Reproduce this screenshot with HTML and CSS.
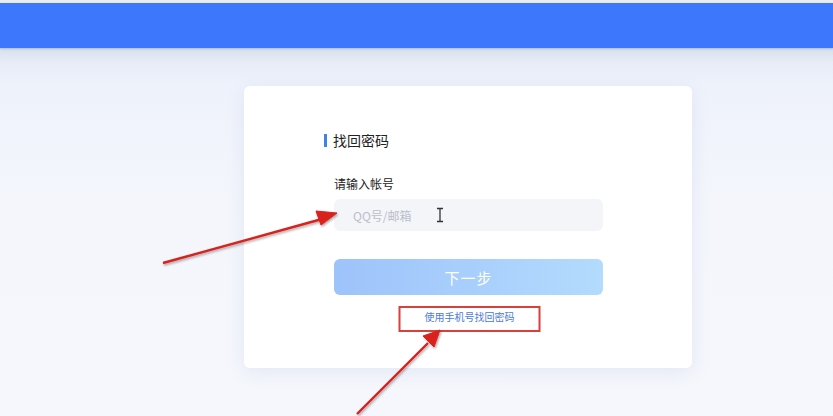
FILE: index.html
```html
<!DOCTYPE html>
<html lang="zh">
<head>
<meta charset="utf-8">
<link rel="stylesheet" href="styles.css">
</head>
<body>
<div class="topline"></div>
<header class="header"></header>
<main class="main">
  <section class="card">
    <div class="title"><span class="bar"></span><span>找回密码</span></div>
    <div class="label">请输入帐号</div>
    <div class="input">
      <span class="ph">QQ号/邮箱</span>
      <svg class="ibeam" width="8" height="16" viewBox="0 0 8 16"><path d="M1 1.5h6M1 14.5h6M4 1.5v13" stroke="#333" stroke-width="1.3" fill="none"/></svg>
    </div>
    <button class="btn">下一步</button>
    <div class="linkrow"><a class="link">使用手机号找回密码</a></div>
  </section>
</main>
<svg class="annot" width="833" height="416" viewBox="0 0 833 416">
  <defs>
    <filter id="sh" x="-20%" y="-20%" width="140%" height="140%">
      <feDropShadow dx="1" dy="1.5" stdDeviation="1" flood-color="#000" flood-opacity="0.35"/>
    </filter>
  </defs>
  <rect x="399.5" y="307" width="140" height="24" fill="none" stroke="#d8403c" stroke-width="2"/>
  <g filter="url(#sh)" fill="#d9211c" stroke="#d9211c">
    <line x1="163" y1="263" x2="322" y2="219" stroke-width="2.4"/>
    <polygon points="337,213 316,211 321,225" stroke-width="1"/>
    <line x1="357" y1="414" x2="428" y2="343" stroke-width="2.4"/>
    <polygon points="440,330 423,336 434,347" stroke-width="1"/>
  </g>
</svg>
</body>
</html>
```
FILE: styles.css
```css
html, body {
  margin: 0;
  padding: 0;
}
body {
  width: 833px;
  height: 416px;
  overflow: hidden;
  position: relative;
  font-family: "Noto Sans CJK SC", "Noto Sans", sans-serif;
  background: linear-gradient(180deg, #d7e0ec 48px, #e7ecf7 62px, #eef2fb 85px, #f4f6fc 200px, #f5f7fc 100%);
}
.topline {
  height: 3px;
  background: #e9ecf0;
}
.header {
  height: 45px;
  background: #3d78fc;
  box-shadow: 0 1px 2px rgba(40, 80, 160, 0.25);
}
.main {
  display: flex;
  justify-content: flex-start;
  padding-top: 38px;
  padding-left: 244px;
}
.card {
  width: 448px;
  height: 282px;
  box-sizing: border-box;
  background: #fff;
  border-radius: 6px;
  box-shadow: 0 4px 18px rgba(120, 140, 200, 0.14);
  padding: 44px 89px 0 90px;
}
.title {
  display: flex;
  align-items: center;
  gap: 6px;
  margin-left: -10px;
  height: 20px;
  font-size: 14px;
  color: #222;
}
.bar {
  width: 3px;
  height: 13px;
  background: #3d85e0;
}
.label {
  margin-top: 25px;
  font-size: 12px;
  line-height: 17px;
  color: #222;
}
.input {
  position: relative;
  margin-top: 7px;
  height: 32px;
  background: #f3f5f9;
  border-radius: 6px;
  display: flex;
  align-items: center;
  padding-left: 19px;
}
.ph {
  font-size: 12px;
  color: #b9bfca;
}
.ibeam {
  position: absolute;
  left: 102px;
  top: 8px;
}
.btn {
  display: block;
  width: 100%;
  margin-top: 28px;
  height: 36px;
  border: none;
  border-radius: 6px;
  background: linear-gradient(90deg, #9dc3fb, #b3dbfd);
  color: #fff;
  font-family: "Noto Sans CJK SC", "Noto Sans", sans-serif;
  font-size: 15px;
  letter-spacing: 1px;
  padding: 0;
}
.linkrow {
  margin-top: 12px;
  text-align: center;
  line-height: 14px;
}
.link {
  font-size: 10px;
  color: #4a7ad6;
  padding-left: 2px;
}
.annot {
  position: absolute;
  left: 0;
  top: 0;
  pointer-events: none;
}
```
